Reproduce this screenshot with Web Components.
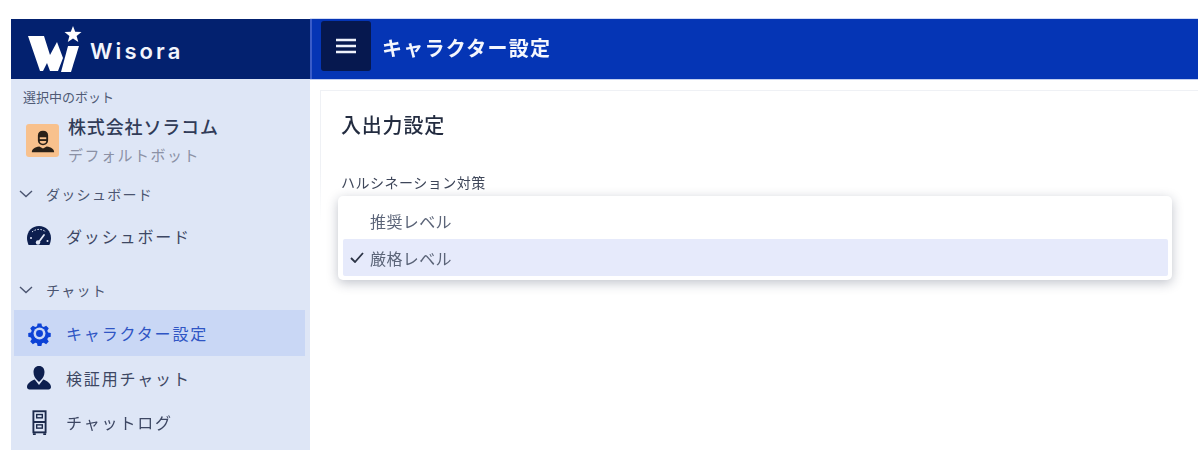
<!DOCTYPE html>
<html lang="ja">
<head>
<meta charset="utf-8">
<title>キャラクター設定</title>
<style>
  html, body { margin: 0; background: #fff; overflow: hidden; }
  body {
    padding: 19px 0 0 11px;
    font-family: "Noto Sans CJK JP", "Noto Sans", sans-serif;
  }
</style>
</head>
<body>
<app-shell>
  <side-bar slot="side">
    <nav-group label="ダッシュボード" style="--group-top: 13px">
      <nav-item label="ダッシュボード" icon="gauge"></nav-item>
    </nav-group>
    <nav-group label="チャット" style="--group-top: 19px">
      <nav-item label="キャラクター設定" icon="gear" active></nav-item>
      <nav-item label="検証用チャット" icon="person"></nav-item>
      <nav-item label="チャットログ" icon="cabinet"></nav-item>
    </nav-group>
  </side-bar>
  <top-bar slot="top" heading="キャラクター設定"></top-bar>
  <settings-card slot="main" heading="入出力設定">
    <select-menu label="ハルシネーション対策">
      <menu-option>推奨レベル</menu-option>
      <menu-option selected>厳格レベル</menu-option>
    </select-menu>
  </settings-card>
</app-shell>

<script>
// Icons are kept in one place so nav-item only has to name them
const ICONS = {
  gauge: `<svg viewBox="0 0 26 22" width="26" height="22">
      <path fill="#0d1f4f" d="M13 1C6 1 1 6.500 1 13c0 2.500.6 4.500 1.600 7h20.800c1-2.500 1.600-4.500 1.600-7C25 6.500 20 1 13 1z"/>
      <path stroke="#e2e8f7" stroke-width="1.800" stroke-linecap="round" fill="none" d="M12 18l6-8"/>
      <circle cx="12" cy="17.500" r="2.200" fill="#e2e8f7"/>
      <circle cx="5" cy="13" r="1" fill="#e2e8f7"/><circle cx="21.500" cy="16" r="1" fill="#e2e8f7"/>
      <path stroke="#e2e8f7" stroke-width="1" stroke-dasharray="1.500 1.500" fill="none" d="M6 7c4-3.500 10-3.500 14 0"/>
    </svg>`,
  gear: `<svg viewBox="0 0 26 26" width="25" height="25">
      <path fill="#0c42d6" d="M10.800 1.500h4.400l.7 3.200 2 .9 2.800-1.700 3 3-1.700 2.800.9 2 3.100.7v4.400l-3.100.7-.9 2 1.700 2.800-3 3-2.800-1.700-2 .8-.7 3.100h-4.400l-.7-3.100-2-.8-2.800 1.700-3-3 1.700-2.800-.9-2-3.100-.7v-4.400l3.100-.7.9-2-1.700-2.800 3-3 2.800 1.700 2-.9z" transform="translate(1.300 1.300) scale(.9)"/>
      <circle cx="13" cy="13" r="6.200" fill="#c9d7f5"/>
      <circle cx="13" cy="13" r="3.600" fill="#0c42d6"/>
    </svg>`,
  person: `<svg viewBox="0 0 26 26" width="26" height="26">
      <path fill="#0d1f4f" d="M13 1c-3.600 0-5.500 2.600-5.500 6 0 3.200 1.700 6.500 3.500 8l2 2 2-2c1.800-1.500 3.500-4.800 3.500-8 0-3.400-1.900-6-5.500-6z"/>
      <path fill="#0d1f4f" d="M8.700 14.500C5 16 1 18.500 1 22c0 1.500 1 2.500 2.500 2.500h19c1.500 0 2.500-1 2.500-2.500 0-3.500-4-6-7.700-7.500L13 20z"/>
    </svg>`,
  cabinet: `<svg viewBox="0 0 16 26" width="15" height="25">
      <rect x="1.500" y="1" width="13" height="22.500" fill="none" stroke="#1c2a4c" stroke-width="2"/>
      <path stroke="#1c2a4c" stroke-width="2" d="M1.500 12.500h13M1 25.500h3M12 25.500h3"/>
      <rect x="5" y="4.500" width="6" height="3.500" fill="none" stroke="#1c2a4c" stroke-width="1.500"/>
      <rect x="5" y="15.500" width="6" height="3.500" fill="none" stroke="#1c2a4c" stroke-width="1.500"/>
    </svg>`
};

class AppShell extends HTMLElement {
  constructor() {
    super();
    this.attachShadow({ mode: 'open' });
    this.shadowRoot.innerHTML = `
      <style>
        /* the reference is a soft video frame, so take the edge off everything */
        :host { display: grid; grid-template-columns: 299px 1fr; column-gap: 2px; width: 1187px; filter: blur(.45px); }
        .main { padding: 11px 0 0 8px; }
      </style>
      <slot name="side"></slot>
      <div>
        <slot name="top"></slot>
        <div class="main"><slot name="main"></slot></div>
      </div>
    `;
  }
}

class SideBar extends HTMLElement {
  constructor() {
    super();
    this.attachShadow({ mode: 'open' });
    this.shadowRoot.innerHTML = `
      <style>
        :host { display: block; height: 431px; background: #dee6f6; color: #3a4560; }
        .brand { display: flex; align-items: center; height: 60px; background: #03216f; padding-left: 16px; gap: 7px; }
        .word { font: 600 22px Inter, sans-serif; letter-spacing: 3.100px; color: #f2f5fc; padding-top: 4px; }
        .bot-label { font-size: 13px; line-height: 18px; color: #4f5a75; padding: 9px 0 0 12px; }
        .bot { display: flex; align-items: center; gap: 9px; padding: 7px 0 0 15px; }
        .avatar { width: 33px; height: 33px; border-radius: 3px; background: #f8c18d; display: flex; align-items: center; justify-content: center; }
        .name { font-size: 18px; line-height: 26px; font-weight: 500; color: #313c58; letter-spacing: .85px; }
        .sub { font-size: 15px; line-height: 26px; color: #8b91a5; letter-spacing: 1.500px; margin-top: 3px; }
      </style>
      <div class="brand">
        <svg viewBox="0 0 56 46" width="56" height="46">
          <path fill="#fff" d="M1 10h16l6 19 7-13 6 16-5 13h-8l-3-8-4 8H13z"/>
          <path fill="#fff" d="M41 20h11l-8 26H34z"/>
          <path fill="#fff" d="M46 0l2.200 5.800 6.300.3-4.900 3.900 1.700 6-5.300-3.400-5.200 3.400 1.600-6-4.900-3.900 6.300-.3z"/>
        </svg>
        <span class="word">Wisora</span>
      </div>
      <div class="bot-label">選択中のボット</div>
      <div class="bot">
        <div class="avatar">
          <svg viewBox="0 0 28 28" width="26" height="26">
            <path fill="#2a2118" d="M14 3c-3.500 0-5.500 2-5.500 5v5c0 3.500 2.300 5.500 5.500 5.500s5.500-2 5.500-5.500V8c0-3-2-5-5.500-5z"/>
            <rect x="10.500" y="10" width="7" height="2" fill="#f8c18d"/>
            <path fill="#f8c18d" d="M10.500 14h7c0 1.800-1.500 3-3.500 3s-3.500-1.200-3.500-3z"/>
            <path fill="#2a2118" d="M2 26c0-3 3-5.500 8-6l4 2 4-2c5 .5 8 3 8 6z"/>
          </svg>
        </div>
        <div>
          <div class="name">株式会社ソラコム</div>
          <div class="sub">デフォルトボット</div>
        </div>
      </div>
      <slot></slot>
    `;
  }
}

class NavGroup extends HTMLElement {
  constructor() {
    super();
    this.attachShadow({ mode: 'open' });
  }

  connectedCallback() {
    this.shadowRoot.innerHTML = `
      <style>
        :host { display: block; padding-top: var(--group-top, 0); }
        .head { display: flex; align-items: center; height: 26px; padding-left: 8px; gap: 13px; font-size: 14px; letter-spacing: 1.300px; color: #4b5570; }
        .items { padding-top: 7px; }
      </style>
      <div class="head">
        <svg viewBox="0 0 14 8" width="14" height="8"><path d="M1 1l6 5.500L13 1" fill="none" stroke="#4b5570" stroke-width="1.400"/></svg>
        <span>${this.getAttribute('label')}</span>
      </div>
      <div class="items"><slot></slot></div>
    `;
  }
}

class NavItem extends HTMLElement {
  constructor() {
    super();
    this.attachShadow({ mode: 'open' });
  }

  connectedCallback() {
    this.shadowRoot.innerHTML = `
      <style>
        :host { display: block; margin: 0 5px 0 3px; }
        .row { display: flex; align-items: center; height: 44px; font-size: 16px; letter-spacing: 1.850px; color: #3d4763; }
        .icon { width: 26px; display: flex; justify-content: center; margin: 0 14px 0 12px; }
        :host([active]) .row { height: 46px; background: #c9d7f5; color: #2f55c4; }
      </style>
      <div class="row">
        <span class="icon">${ICONS[this.getAttribute('icon')]}</span>
        <span>${this.getAttribute('label')}</span>
      </div>
    `;
  }
}

class TopBar extends HTMLElement {
  constructor() {
    super();
    this.attachShadow({ mode: 'open' });
  }

  connectedCallback() {
    this.shadowRoot.innerHTML = `
      <style>
        :host { display: flex; align-items: flex-start; height: 60px; margin-left: -2px; border-left: 2px solid #3a5cc8; background: #0535b5; color: #f4f6fd; padding-left: 9px; box-sizing: border-box; box-shadow: 0 1px 0 #c2cef0, 0 -1px 0 #d3dcf4; }
        .menu { width: 50px; height: 50px; margin-top: 2px; border-radius: 3px; background: #06184f; display: flex; align-items: center; justify-content: center; }
        h1 { margin: 0 0 0 11px; font-size: 20px; font-weight: 700; letter-spacing: 1.250px; line-height: 58px; }
      </style>
      <div class="menu">
        <svg viewBox="0 0 20 16" width="20" height="16"><path d="M0 2h20M0 8h20M0 14h20" stroke="#eef1fb" stroke-width="2.700"/></svg>
      </div>
      <h1>${this.getAttribute('heading')}</h1>
    `;
  }
}

class SettingsCard extends HTMLElement {
  constructor() {
    super();
    this.attachShadow({ mode: 'open' });
  }

  connectedCallback() {
    this.shadowRoot.innerHTML = `
      <style>
        :host { display: block; border-top: 1px solid #f2f3f6; border-left: 1px solid #f4f5f8; border-image: linear-gradient(#eff1f5 40%, #fff 70%) 1; padding: 19px 0 0 20px; }
        h2 { margin: 0; font-size: 20px; font-weight: 500; letter-spacing: .8px; line-height: 30px; color: #232c40; }
      </style>
      <h2>${this.getAttribute('heading')}</h2>
      <slot></slot>
    `;
  }
}

class SelectMenu extends HTMLElement {
  constructor() {
    super();
    this.attachShadow({ mode: 'open' });
  }

  connectedCallback() {
    this.shadowRoot.innerHTML = `
      <style>
        :host { display: block; padding-top: 32px; }
        label { display: block; font-size: 14px; line-height: 20px; letter-spacing: .5px; color: #3e4659; margin-bottom: 4px; }
        .list { position: relative; margin-left: -3px; width: 834px; height: 84px; box-sizing: border-box; padding: 6px 4px 3px 5px; background: #fff; border-radius: 5px; box-shadow: 0 3px 12px rgba(30, 40, 70, .28); }
      </style>
      <label>${this.getAttribute('label')}</label>
      <div class="list"><slot></slot></div>
    `;
  }
}

class MenuOption extends HTMLElement {
  constructor() {
    super();
    this.attachShadow({ mode: 'open' });
    this.shadowRoot.innerHTML = `
      <style>
        :host { display: flex; align-items: center; height: 37px; padding-left: 27px; position: relative; border-radius: 2px; font-size: 16px; letter-spacing: .4px; color: #5b6478; }
        :host([selected]) { background: #e6eafb; }
        svg { display: none; position: absolute; left: 7px; top: 13px; }
        :host([selected]) svg { display: block; }
      </style>
      <svg viewBox="0 0 14 11" width="14" height="11"><path d="M1 6l4 4 8-9" fill="none" stroke="#2c3446" stroke-width="1.800"/></svg>
      <slot></slot>
    `;
  }
}

customElements.define('app-shell', AppShell);
customElements.define('side-bar', SideBar);
customElements.define('nav-group', NavGroup);
customElements.define('nav-item', NavItem);
customElements.define('top-bar', TopBar);
customElements.define('settings-card', SettingsCard);
customElements.define('select-menu', SelectMenu);
customElements.define('menu-option', MenuOption);
</script>
</body>
</html>
